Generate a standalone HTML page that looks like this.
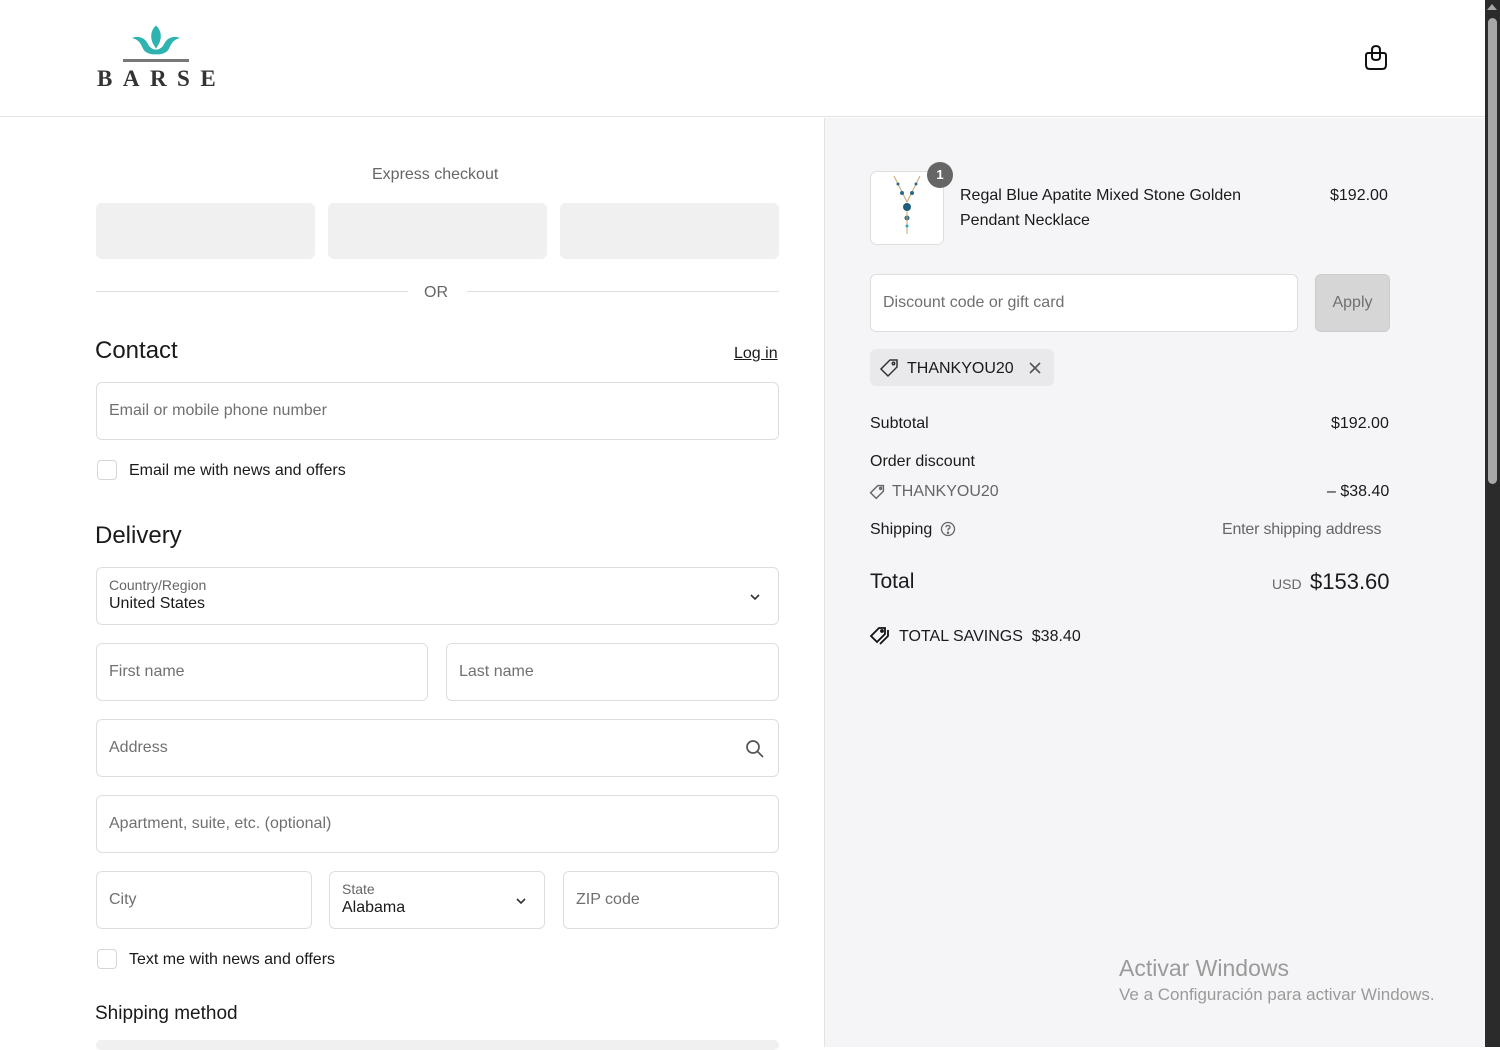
<!DOCTYPE html>
<html><head><meta charset="utf-8"><style>
*{box-sizing:border-box;margin:0;padding:0}
body{width:1500px;height:1047px;overflow:hidden;background:#fff;font-family:"Liberation Sans",Arial,sans-serif;color:#1a1a1a;position:relative}
.a{position:absolute}
.inp{position:absolute;border:1px solid #dedede;border-radius:6px;background:#fff;font-size:16px;color:#707070;padding-left:12px;display:flex;align-items:center}
.btn{position:absolute;top:203px;height:56px;width:219px;background:#f0f0f0;border-radius:6px}
.cb{position:absolute;width:20px;height:20px;border:1px solid #d6d6d6;border-radius:4px;background:#fff}
.t{position:absolute;font-size:16px;white-space:nowrap}
</style></head><body>
<div class="a" style="left:0;top:0;width:1485px;height:117px;border-bottom:1px solid #e3e3e3;background:#fff"></div>
<svg class="a" style="left:131px;top:23px" width="50" height="34" viewBox="0 0 52 32"><path d="M26 1C20 6 20 14 23 20L26 25L29 20C32 14 32 6 26 1Z" fill="#2fb3b1"/><path d="M1 14C8 11 14 14 17 19C19 24 23 26 26 26C29 26 33 24 35 19C38 14 44 11 51 14C45 15 42 19 40 24C38 29 33 31 26 31C19 31 14 29 12 24C10 19 7 15 1 14Z" fill="#2fb3b1"/></svg>
<div class="a" style="left:123px;top:59px;width:66px;height:3px;background:#777"></div>
<div class="a" style="left:97px;top:66px;font-family:'Liberation Serif',serif;font-weight:bold;font-size:23px;letter-spacing:10.5px;color:#333">BARSE</div>
<svg class="a" style="left:1364px;top:43px" width="24" height="28" viewBox="0 0 24 28" fill="none" stroke="#111" stroke-width="2"><path d="M4 10H20Q22 10 22 13V22Q22 26 18 26H6Q2 26 2 22V13Q2 10 4 10Z"/><path d="M8 14V7Q8 3 12 3Q16 3 16 7V14Q16 17 12 17Q8 17 8 14Z"/></svg>
<div class="a" style="left:1485px;top:0;width:15px;height:1047px;background:#2b2b2b"></div>
<div class="a" style="left:1488px;top:18px;width:9px;height:466px;background:#a8a8a8;border-radius:5px"></div>
<div class="a" style="left:1487px;top:4px;width:0;height:0;border-left:5px solid transparent;border-right:5px solid transparent;border-bottom:6px solid #a8a8a8"></div>
<div class="a" style="left:824px;top:118px;width:661px;height:929px;background:#f5f5f7;border-left:1px solid #e3e3e3"></div>
<div class="t" style="left:372px;top:166px;color:#666">Express checkout</div>
<div class="btn" style="left:96px"></div><div class="btn" style="left:328px"></div><div class="btn" style="left:560px"></div>
<div class="a" style="left:96px;top:291px;width:312px;height:1px;background:#dedede"></div>
<div class="a" style="left:467px;top:291px;width:312px;height:1px;background:#dedede"></div>
<div class="t" style="left:424px;top:284px;color:#666">OR</div>
<div class="t" style="left:95px;top:337px;font-size:24px">Contact</div>
<div class="t" style="left:734px;top:345px;text-decoration:underline">Log in</div>
<div class="inp" style="left:96px;top:382px;width:683px;height:58px">Email or mobile phone number</div>
<div class="cb" style="left:97px;top:460px"></div>
<div class="t" style="left:129px;top:462px">Email me with news and offers</div>
<div class="t" style="left:95px;top:522px;font-size:24px">Delivery</div>
<div class="inp" style="left:96px;top:567px;width:683px;height:58px;display:block;padding-top:9px"><div style="font-size:14px;color:#666">Country/Region</div><div style="color:#1a1a1a;margin-top:2px">United States</div></div>
<svg class="a" style="left:748px;top:590px" width="14" height="14" viewBox="0 0 14 14" fill="none" stroke="#333" stroke-width="1.6"><path d="M3 5L7 9L11 5"/></svg>
<div class="inp" style="left:96px;top:643px;width:332px;height:58px">First name</div>
<div class="inp" style="left:446px;top:643px;width:333px;height:58px">Last name</div>
<div class="inp" style="left:96px;top:719px;width:683px;height:58px">Address</div>
<svg class="a" style="left:745px;top:739px" width="20" height="20" viewBox="0 0 20 20" fill="none" stroke="#555" stroke-width="1.7"><circle cx="8" cy="8" r="6"/><path d="M12.5 12.5L18 18"/></svg>
<div class="inp" style="left:96px;top:795px;width:683px;height:58px">Apartment, suite, etc. (optional)</div>
<div class="inp" style="left:96px;top:871px;width:216px;height:58px">City</div>
<div class="inp" style="left:329px;top:871px;width:216px;height:58px;display:block;padding-top:9px"><div style="font-size:14px;color:#666">State</div><div style="color:#1a1a1a;margin-top:2px">Alabama</div></div>
<svg class="a" style="left:514px;top:894px" width="14" height="14" viewBox="0 0 14 14" fill="none" stroke="#333" stroke-width="1.6"><path d="M3 5L7 9L11 5"/></svg>
<div class="inp" style="left:563px;top:871px;width:216px;height:58px">ZIP code</div>
<div class="cb" style="left:97px;top:949px"></div>
<div class="t" style="left:129px;top:951px">Text me with news and offers</div>
<div class="t" style="left:95px;top:1003px;font-size:19px">Shipping method</div>
<div class="a" style="left:96px;top:1040px;width:683px;height:10px;background:#f0f0f0;border-radius:5px"></div>
<div class="a" style="left:870px;top:171px;width:74px;height:74px;background:#fff;border:1px solid #dedede;border-radius:7px"></div>
<svg class="a" style="left:890px;top:174px" width="34" height="66" viewBox="0 0 34 66" fill="none"><path d="M4 2L17 28L30 2" stroke="#c9a86a" stroke-width="1"/><circle cx="8" cy="10" r="1.5" fill="#2a6a8a"/><circle cx="26" cy="10" r="1.5" fill="#2a6a8a"/><circle cx="12" cy="19" r="2" fill="#2a6a8a"/><circle cx="22" cy="19" r="2" fill="#2a6a8a"/><circle cx="17" cy="33" r="4" fill="#1f5f7a"/><circle cx="17" cy="44" r="2.5" fill="#2a6a8a"/><path d="M17 37V60" stroke="#c9a86a"/><circle cx="17" cy="52" r="1.5" fill="#3aa" /></svg>
<div class="a" style="left:927px;top:162px;width:26px;height:26px;border-radius:13px;background:#666;color:#fff;font-size:13px;font-weight:bold;text-align:center;line-height:26px">1</div>
<div class="t" style="left:960px;top:183px;line-height:25px">Regal Blue Apatite Mixed Stone Golden<br>Pendant Necklace</div>
<div class="t" style="left:1330px;top:187px">$192.00</div>
<div class="inp" style="left:870px;top:274px;width:428px;height:58px">Discount code or gift card</div>
<div class="a" style="left:1315px;top:274px;width:75px;height:58px;background:#d6d6d6;border:1px solid #ccc;border-radius:6px;color:#707070;font-size:16px;text-align:center;line-height:56px">Apply</div>
<div class="a" style="left:870px;top:349px;width:184px;height:37px;background:#e9e9ec;border-radius:6px"></div>
<svg class="a" style="left:879px;top:358px" width="20" height="20" viewBox="0 0 20 20" fill="none" stroke="#333" stroke-width="1.5"><path d="M11 2H18V9L9 18L2 11Z"/><circle cx="14.5" cy="5.5" r="1.2"/></svg>
<div class="t" style="left:907px;top:360px">THANKYOU20</div>
<svg class="a" style="left:1027px;top:360px" width="16" height="16" viewBox="0 0 16 16" stroke="#555" stroke-width="1.6"><path d="M3 3L13 13M13 3L3 13"/></svg>
<div class="t" style="left:870px;top:415px">Subtotal</div><div class="t" style="left:1331px;top:415px">$192.00</div>
<div class="t" style="left:870px;top:453px">Order discount</div>
<svg class="a" style="left:869px;top:484px" width="16" height="16" viewBox="0 0 20 20" fill="none" stroke="#666" stroke-width="1.8"><path d="M11 2H18V9L9 18L2 11Z"/><circle cx="14.5" cy="5.5" r="1.2"/></svg>
<div class="t" style="left:892px;top:483px;color:#666">THANKYOU20</div><div class="t" style="left:1327px;top:483px">– $38.40</div>
<div class="t" style="left:870px;top:521px">Shipping</div>
<svg class="a" style="left:940px;top:521px" width="16" height="16" viewBox="0 0 16 16" fill="none" stroke="#666" stroke-width="1.3"><circle cx="8" cy="8" r="6.5"/><path d="M6 6.3Q6 4.5 8 4.5Q10 4.5 10 6.2Q10 7.5 8 8.2V9.5"/><circle cx="8" cy="11.7" r=".6" fill="#666"/></svg>
<div class="t" style="left:1222px;top:521px;color:#666;letter-spacing:-0.2px">Enter shipping address</div>
<div class="t" style="left:870px;top:570px;font-size:21px">Total</div>
<div class="t" style="left:1272px;top:576px;font-size:14px;color:#666">USD</div>
<div class="t" style="left:1310px;top:569px;font-size:22px">$153.60</div>
<svg class="a" style="left:869px;top:626px" width="22" height="20" viewBox="0 0 22 20" fill="none" stroke="#111" stroke-width="1.8"><path d="M10 2H16V8L8 16L2 10Z"/><path d="M19 4V10L11 18"/><circle cx="13" cy="5" r="1"/></svg>
<div class="t" style="left:899px;top:628px">TOTAL SAVINGS&nbsp; $38.40</div>
<div class="t" style="left:1119px;top:955px;font-size:23px;color:#9a9a9a">Activar Windows</div>
<div class="t" style="left:1119px;top:985px;font-size:17px;color:#9a9a9a">Ve a Configuración para activar Windows.</div>
</body></html>
